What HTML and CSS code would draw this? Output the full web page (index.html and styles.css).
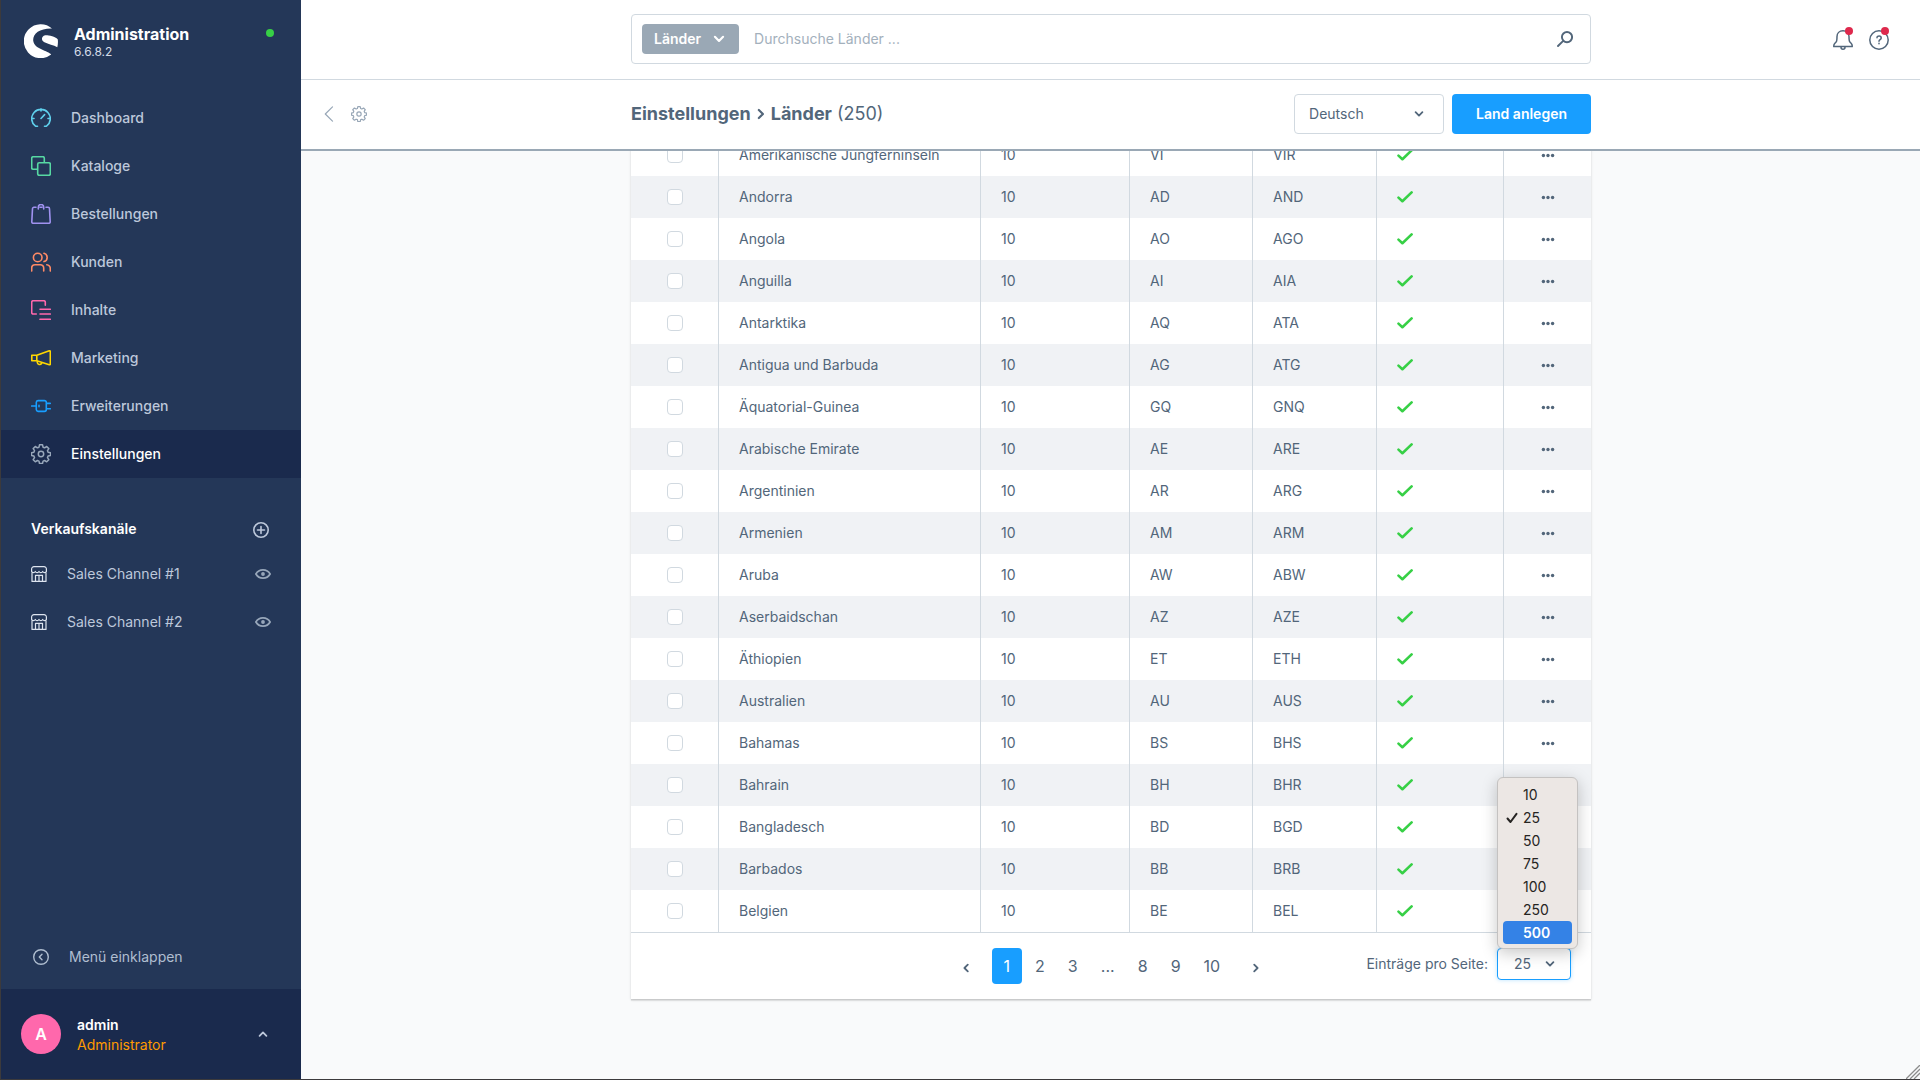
FILE: index.html
```html
<!DOCTYPE html>
<html lang="de">
<head>
<meta charset="utf-8">
<title>Länder</title>
<link rel="stylesheet" href="styles.css">
</head>
<body>
<svg class="sprite" aria-hidden="true">
  <symbol id="check" viewBox="0 0 16 16"><path d="M1.5 8.6 5.4 12.2 14.6 3.4" fill="none" stroke="#37d046" stroke-width="2.6" stroke-linecap="round" stroke-linejoin="round"/></symbol>
  <symbol id="dots" viewBox="0 0 16 16"><g fill="#52667a"><circle cx="3.4" cy="8.500" r="1.700"/><circle cx="8" cy="8.500" r="1.700"/><circle cx="12.6" cy="8.500" r="1.700"/></g></symbol>
  <symbol id="chevron" viewBox="0 0 10 10"><path d="M1.6 3.2 5 6.6 8.4 3.2" fill="none" stroke="currentColor" stroke-width="1.8" stroke-linecap="round" stroke-linejoin="round"/></symbol>
  <symbol id="gear" viewBox="0 0 20 20"><g fill="none" stroke="currentColor" stroke-width="1.5" stroke-linejoin="round"><circle cx="10" cy="10" r="2.7"/><path d="M8.5.8h3l.6 2.4 1.5.6 2.1-1.3 2.1 2.1-1.3 2.1.6 1.6 2.4.5v2.6l-2.4.6-.6 1.6 1.3 2.1-2.1 2.1-2.1-1.3-1.5.6-.6 2.4h-3l-.5-2.4-1.6-.6-2.1 1.3-2.1-2.1 1.3-2.1-.6-1.6-2.4-.6V8.8l2.4-.5.6-1.6-1.3-2.1 2.1-2.1 2.1 1.3 1.6-.6z"/></g></symbol>
  <symbol id="shop" viewBox="0 0 16 16"><g fill="none" stroke="currentColor" stroke-width="1.2" stroke-linejoin="round"><path d="M3 .6h10a2.4 2.4 0 0 1 2.4 2.4v2.5c-.8 1.5-2.8 1.5-3.7 0-.9 1.5-2.8 1.5-3.7 0-.9 1.5-2.8 1.5-3.7 0-.9 1.5-2.9 1.5-3.7 0V3A2.4 2.4 0 0 1 3 .6zM1 6.5v8.9h14V6.5M4.5 15.400V9.300h7v6.100M8 9.300v6.100"/></g></symbol>
  <symbol id="eye" viewBox="0 0 16 16"><path d="M.9 8C4 2.500 12 2.500 15.100 8 12 13.500 4 13.500.9 8z" fill="none" stroke="currentColor" stroke-width="1.700"/><circle cx="8" cy="8" r="1.900" fill="currentColor"/></symbol>
</svg>
<div class="app">
  <aside class="sidebar">
    <header class="brand">
      <svg class="logo" viewBox="0 0 34 34"><path d="M28 4.400A17 17 0 1 0 27.200 30.600C24.500 26.500 10 25.400 9.200 16.500 8.800 9.600 15.500 4.100 28 4.400zM33.300 23.200C33.900 20.700 34.200 17.600 33.700 15.300 31 12.200 25 11.100 21.200 11.200 17 12.300 17 16.400 20.400 18.200 24.300 20.300 29.700 20.800 33.300 23.200z" fill="#fff"/></svg>
      <div class="brand-text"><strong>Administration</strong><span>6.6.8.2</span></div>
      <i class="status"></i>
    </header>
    <nav class="nav">
      <a href="#"><svg viewBox="0 0 20 20" class="cyan"><path d="M6.500 18.200H4.500A9.300 9.300 0 1 1 15.500 18.200H13.500M10 .8V3M.8 10.500H3M17 10.500h2.200M10 10.500l3.600-3.900"/></svg>Dashboard</a>
      <a href="#"><svg viewBox="0 0 20 20" class="green"><path d="M6 13.300H2.200A1.500 1.500 0 0 1 .7 11.800V2.200A1.500 1.500 0 0 1 2.200.7h9.600A1.500 1.500 0 0 1 13.300 2.200V6"/><rect x="6.700" y="6.700" width="12.600" height="12.600" rx="1.500"/></svg>Kataloge</a>
      <a href="#"><svg viewBox="0 0 20 20" class="purple"><path d="M5 3.300H2.900A1.400 1.400 0 0 0 1.500 4.700L.8 17.800A1.400 1.400 0 0 0 2.200 19.300H17.800A1.400 1.400 0 0 0 19.200 17.800L18.500 4.700A1.400 1.400 0 0 0 17.100 3.300H15M9 3.300H11M7.300 5V3.200A2.700 2.700 0 0 1 12.700 3.200V5"/></svg>Bestellungen</a>
      <a href="#"><svg viewBox="0 0 20 20" class="orange"><circle cx="6.700" cy="5.500" r="4.300"/><path d="M.7 19V16A3.300 3.300 0 0 1 4 12.700H9.400A3.300 3.300 0 0 1 12.700 16V19M13 1.300A4.300 4.300 0 0 1 13 9.600M15.800 12.700A4 4 0 0 1 19.300 16.500V19"/></svg>Kunden</a>
      <a href="#"><svg viewBox="0 0 20 20" class="pink"><path d="M5.300 14H2.200A1.500 1.500 0 0 1 .7 12.500V2.200A1.500 1.500 0 0 1 2.200.7h10.600A1.500 1.500 0 0 1 14.300 2.200V5.300M9 9.300H19.300M9 14H19.300M9 19.300H19.300"/></svg>Inhalte</a>
      <a href="#"><svg viewBox="0 0 20 20" class="yellow"><path d="M5.800 7.200 18.300 2.800Q19.300 2.600 19.300 3.700V16Q19.300 17 18.300 16.700L5.800 12.700zM.8 7.200H5.800V12.700H.8zM6.300 13V14.500A2.300 2.300 0 0 0 10.500 15.500L11 14.500"/></svg>Marketing</a>
      <a href="#"><svg viewBox="0 0 20 20" class="blue"><path d="M.6 10H5.300M7 4.600H13.500A1.800 1.800 0 0 1 15.300 6.400V13.600A1.800 1.800 0 0 1 13.500 15.400H7A1.800 1.800 0 0 1 5.300 13.600V6.400A1.800 1.800 0 0 1 7 4.600zM15.300 7.400H19.300M15.300 12.700H19.300M8 9.200V10.800"/></svg>Erweiterungen</a>
      <a href="#" class="active"><svg viewBox="0 0 20 20" class="grey"><use href="#gear"/></svg>Einstellungen</a>
    </nav>
    <section class="channels">
      <div class="channels-head"><h2>Verkaufskanäle</h2><button type="button" aria-label="Hinzufügen"><svg class="i16" viewBox="0 0 16 16"><path d="M8 4.500V11.500M4.500 8H11.500M8 .8a7.200 7.200 0 1 1 0 14.400A7.200 7.200 0 0 1 8 .8z" fill="none" stroke="currentColor" stroke-width="1.600" stroke-linecap="round"/></svg></button></div>
      <a href="#"><svg class="i16 shop"><use href="#shop"/></svg><span>Sales Channel #1</span><svg class="i16 eye"><use href="#eye"/></svg></a>
      <a href="#"><svg class="i16 shop"><use href="#shop"/></svg><span>Sales Channel #2</span><svg class="i16 eye"><use href="#eye"/></svg></a>
    </section>
    <button type="button" class="collapse"><svg class="i16" viewBox="0 0 16 16"><path d="M9 5.200 6.300 8 9 10.800M8 .7a7.300 7.300 0 1 1 0 14.600A7.300 7.300 0 0 1 8 .7z" fill="none" stroke="currentColor" stroke-width="1.400" stroke-linecap="round" stroke-linejoin="round"/></svg>Menü einklappen</button>
    <button type="button" class="user">
      <span class="avatar">A</span>
      <span class="user-text"><strong>admin</strong><span>Administrator</span></span>
      <svg class="i10 up"><use href="#chevron"/></svg>
    </button>
  </aside>
  <main class="main">
    <header class="topbar">
      <div></div>
      <form class="search">
        <button type="button" class="tag">Länder<svg class="i12"><use href="#chevron"/></svg></button>
        <input type="text" placeholder="Durchsuche Länder ..." aria-label="Suche">
        <button type="button" class="plain" aria-label="Suchen"><svg class="i16" viewBox="0 0 16 16"><path d="M6.200 9.800 1 15M10 1a5.100 5.100 0 1 1 0 10.200A5.100 5.100 0 0 1 10 1z" fill="none" stroke="currentColor" stroke-width="1.900" stroke-linecap="round"/></svg></button>
      </form>
      <div class="tools">
        <button type="button" class="plain tool" aria-label="Benachrichtigungen"><svg class="i20" viewBox="0 0 20 20"><path d="M10 .8C6.300.8 4 3.300 4 6.500 4 11 3.700 11.500 1.900 13.200 1 14.200.6 15 .8 16.600H19.200C19.400 15 19 14.200 18.100 13.200 16.300 11.500 16 11 16 6.500 16 3.300 13.700.8 10 .8zM8 17.200A2 2 0 0 0 12 17.200" fill="none" stroke="currentColor" stroke-width="1.500" stroke-linejoin="round"/></svg><i class="badge"></i></button>
        <button type="button" class="plain tool" aria-label="Hilfe"><svg class="i20" viewBox="0 0 20 20"><path d="M10 .8a9.200 9.200 0 1 1 0 18.400A9.200 9.200 0 0 1 10 .8z" fill="none" stroke="currentColor" stroke-width="1.500"/><path d="M8 7.700C8 5.500 12.200 5.400 12.200 7.900 12.200 9.700 10 9.500 10 11.300M10 13.200V13.700" fill="none" stroke="currentColor" stroke-width="1.500" stroke-linecap="round"/></svg><i class="badge"></i></button>
      </div>
    </header>
    <div class="smartbar">
      <div class="smart-left">
        <a href="#" aria-label="Zurück"><svg class="i16" viewBox="0 0 16 16"><path d="M11.500.8 4.300 8 11.500 15.200" fill="none" stroke="currentColor" stroke-width="1.200" stroke-linecap="round" stroke-linejoin="round"/></svg></a>
        <a href="#" aria-label="Optionen"><svg class="i16"><use href="#gear"/></svg></a>
      </div>
      <div class="smart-center">
        <h1>Einstellungen<svg class="i12 right"><use href="#chevron"/></svg>Länder <span>(250)</span></h1>
        <div class="pick lang"><select aria-label="Sprache"><option>Deutsch</option></select><svg class="i10"><use href="#chevron"/></svg></div>
        <button type="button" class="primary">Land anlegen</button>
      </div>
      <div></div>
    </div>
    <div class="content">
      <section class="card">
        <table>
          <colgroup><col class="c1"><col class="c2"><col class="c3"><col class="c4"><col class="c5"><col class="c6"><col class="c7"></colgroup>
          <tbody>
          <tr><td><input type="checkbox" aria-label="Amerikanische Jungferninseln"></td><td>Amerikanische Jungferninseln</td><td>10</td><td>VI</td><td>VIR</td><td><svg class="i16"><use href="#check"/></svg></td><td><button type="button" class="plain" aria-label="Menü"><svg class="i16"><use href="#dots"/></svg></button></td></tr>
          <tr><td><input type="checkbox" aria-label="Andorra"></td><td>Andorra</td><td>10</td><td>AD</td><td>AND</td><td><svg class="i16"><use href="#check"/></svg></td><td><button type="button" class="plain" aria-label="Menü"><svg class="i16"><use href="#dots"/></svg></button></td></tr>
          <tr><td><input type="checkbox" aria-label="Angola"></td><td>Angola</td><td>10</td><td>AO</td><td>AGO</td><td><svg class="i16"><use href="#check"/></svg></td><td><button type="button" class="plain" aria-label="Menü"><svg class="i16"><use href="#dots"/></svg></button></td></tr>
          <tr><td><input type="checkbox" aria-label="Anguilla"></td><td>Anguilla</td><td>10</td><td>AI</td><td>AIA</td><td><svg class="i16"><use href="#check"/></svg></td><td><button type="button" class="plain" aria-label="Menü"><svg class="i16"><use href="#dots"/></svg></button></td></tr>
          <tr><td><input type="checkbox" aria-label="Antarktika"></td><td>Antarktika</td><td>10</td><td>AQ</td><td>ATA</td><td><svg class="i16"><use href="#check"/></svg></td><td><button type="button" class="plain" aria-label="Menü"><svg class="i16"><use href="#dots"/></svg></button></td></tr>
          <tr><td><input type="checkbox" aria-label="Antigua und Barbuda"></td><td>Antigua und Barbuda</td><td>10</td><td>AG</td><td>ATG</td><td><svg class="i16"><use href="#check"/></svg></td><td><button type="button" class="plain" aria-label="Menü"><svg class="i16"><use href="#dots"/></svg></button></td></tr>
          <tr><td><input type="checkbox" aria-label="Äquatorial-Guinea"></td><td>Äquatorial-Guinea</td><td>10</td><td>GQ</td><td>GNQ</td><td><svg class="i16"><use href="#check"/></svg></td><td><button type="button" class="plain" aria-label="Menü"><svg class="i16"><use href="#dots"/></svg></button></td></tr>
          <tr><td><input type="checkbox" aria-label="Arabische Emirate"></td><td>Arabische Emirate</td><td>10</td><td>AE</td><td>ARE</td><td><svg class="i16"><use href="#check"/></svg></td><td><button type="button" class="plain" aria-label="Menü"><svg class="i16"><use href="#dots"/></svg></button></td></tr>
          <tr><td><input type="checkbox" aria-label="Argentinien"></td><td>Argentinien</td><td>10</td><td>AR</td><td>ARG</td><td><svg class="i16"><use href="#check"/></svg></td><td><button type="button" class="plain" aria-label="Menü"><svg class="i16"><use href="#dots"/></svg></button></td></tr>
          <tr><td><input type="checkbox" aria-label="Armenien"></td><td>Armenien</td><td>10</td><td>AM</td><td>ARM</td><td><svg class="i16"><use href="#check"/></svg></td><td><button type="button" class="plain" aria-label="Menü"><svg class="i16"><use href="#dots"/></svg></button></td></tr>
          <tr><td><input type="checkbox" aria-label="Aruba"></td><td>Aruba</td><td>10</td><td>AW</td><td>ABW</td><td><svg class="i16"><use href="#check"/></svg></td><td><button type="button" class="plain" aria-label="Menü"><svg class="i16"><use href="#dots"/></svg></button></td></tr>
          <tr><td><input type="checkbox" aria-label="Aserbaidschan"></td><td>Aserbaidschan</td><td>10</td><td>AZ</td><td>AZE</td><td><svg class="i16"><use href="#check"/></svg></td><td><button type="button" class="plain" aria-label="Menü"><svg class="i16"><use href="#dots"/></svg></button></td></tr>
          <tr><td><input type="checkbox" aria-label="Äthiopien"></td><td>Äthiopien</td><td>10</td><td>ET</td><td>ETH</td><td><svg class="i16"><use href="#check"/></svg></td><td><button type="button" class="plain" aria-label="Menü"><svg class="i16"><use href="#dots"/></svg></button></td></tr>
          <tr><td><input type="checkbox" aria-label="Australien"></td><td>Australien</td><td>10</td><td>AU</td><td>AUS</td><td><svg class="i16"><use href="#check"/></svg></td><td><button type="button" class="plain" aria-label="Menü"><svg class="i16"><use href="#dots"/></svg></button></td></tr>
          <tr><td><input type="checkbox" aria-label="Bahamas"></td><td>Bahamas</td><td>10</td><td>BS</td><td>BHS</td><td><svg class="i16"><use href="#check"/></svg></td><td><button type="button" class="plain" aria-label="Menü"><svg class="i16"><use href="#dots"/></svg></button></td></tr>
          <tr><td><input type="checkbox" aria-label="Bahrain"></td><td>Bahrain</td><td>10</td><td>BH</td><td>BHR</td><td><svg class="i16"><use href="#check"/></svg></td><td><button type="button" class="plain" aria-label="Menü"><svg class="i16"><use href="#dots"/></svg></button></td></tr>
          <tr><td><input type="checkbox" aria-label="Bangladesch"></td><td>Bangladesch</td><td>10</td><td>BD</td><td>BGD</td><td><svg class="i16"><use href="#check"/></svg></td><td><button type="button" class="plain" aria-label="Menü"><svg class="i16"><use href="#dots"/></svg></button></td></tr>
          <tr><td><input type="checkbox" aria-label="Barbados"></td><td>Barbados</td><td>10</td><td>BB</td><td>BRB</td><td><svg class="i16"><use href="#check"/></svg></td><td><button type="button" class="plain" aria-label="Menü"><svg class="i16"><use href="#dots"/></svg></button></td></tr>
          <tr><td><input type="checkbox" aria-label="Belgien"></td><td>Belgien</td><td>10</td><td>BE</td><td>BEL</td><td><svg class="i16"><use href="#check"/></svg></td><td><button type="button" class="plain" aria-label="Menü"><svg class="i16"><use href="#dots"/></svg></button></td></tr>
          </tbody>
        </table>
        <footer class="pagination">
          <div></div>
          <nav class="pages">
            <button type="button" class="arrow" aria-label="Zurück"><svg class="i10 left"><use href="#chevron"/></svg></button>
            <button type="button" class="current">1</button>
            <button type="button">2</button>
            <button type="button">3</button>
            <span>...</span>
            <button type="button">8</button>
            <button type="button">9</button>
            <button type="button">10</button>
            <button type="button" class="arrow" aria-label="Weiter"><svg class="i10 right"><use href="#chevron"/></svg></button>
          </nav>
          <div class="per-page">
            <label for="limit">Einträge pro Seite:</label>
            <div class="pick limit">
              <select id="limit"><option>25</option></select><svg class="i10"><use href="#chevron"/></svg>
              <ul class="menu" role="listbox">
                <li role="option">10</li>
                <li role="option" aria-selected="true"><svg class="tick" viewBox="0 0 12 12"><path d="M1.500 6.500 4.500 10 10.500 1.800" fill="none" stroke="#262422" stroke-width="2" stroke-linecap="round" stroke-linejoin="round"/></svg>25</li>
                <li role="option">50</li>
                <li role="option">75</li>
                <li role="option">100</li>
                <li role="option">250</li>
                <li role="option" class="hover">500</li>
              </ul>
            </div>
          </div>
        </footer>
      </section>
    </div>
  </main>
  <svg class="grip" viewBox="0 0 14 14"><path d="M0 14 14 0M4 14 14 4M8 14 14 8" stroke="#8c8c8c" stroke-width="1.300"/></svg>
</div>
</body>
</html>
```

FILE: styles.css
```css
* { box-sizing: border-box; }
body { margin: 0; font: 14px/20px Inter, "Liberation Sans", sans-serif; color: #52667a; }
button, input, select { font: inherit; color: inherit; margin: 0; }
button { border: 0; background: none; padding: 0; cursor: pointer; text-align: left; }
a { color: inherit; text-decoration: none; }
svg { display: block; flex: none; }
h1, h2, ul { margin: 0; padding: 0; }
.sprite { position: absolute; width: 0; height: 0; }
.i10 { width: 10px; height: 10px; }
.i12 { width: 12px; height: 12px; }
.i16 { width: 16px; height: 16px; }
.i20 { width: 20px; height: 20px; }
.up { transform: rotate(180deg); }
.left { transform: rotate(90deg); }
.right { transform: rotate(-90deg); }

.app { position: relative; display: flex; height: 100vh; border: solid #3c3a3c; border-width: 0 0 1px 1px; }

/* Sidebar */
.sidebar { width: 300px; flex: none; display: flex; flex-direction: column; background: #243758; color: #bdc8db; }
.brand { display: flex; align-items: flex-start; height: 94px; padding: 24px 27px 0 23px; color: #fff; }
.logo { width: 34px; height: 34px; margin-right: 16px; }
.brand-text { flex: 1; display: flex; flex-direction: column; }
.brand-text strong { font-size: 16px; font-weight: 700; line-height: 20px; }
.brand-text span { font-size: 12px; line-height: 16px; color: #d5dce8; }
.status { width: 8px; height: 8px; margin-top: 5px; border-radius: 50%; background: #37d046; }
.nav a { display: flex; align-items: center; gap: 20px; height: 48px; padding: 0 30px; font-weight: 500; }
.nav svg { width: 20px; height: 20px; fill: none; stroke: currentColor; stroke-width: 1.6; stroke-linecap: round; stroke-linejoin: round; }
.nav .active { background: #1a2a4d; color: #fff; }
.cyan { color: #5fd0ec; }
.green { color: #57d9a3; }
.purple { color: #a092f0; }
.orange { color: #ff8a65; }
.pink { color: #ff68ac; }
.yellow { color: #ffd700; }
.blue { color: #189eff; }
.nav .grey { color: #98a7ba; }
.channels { flex: 1; padding-top: 32px; }
.channels-head { display: flex; justify-content: space-between; align-items: center; height: 40px; padding: 0 32px 0 30px; }
.channels h2 { font-size: 14px; line-height: 20px; padding-bottom: 2px; font-weight: 600; color: #fff; }
.channels a { display: flex; align-items: center; gap: 20px; height: 48px; padding: 0 30px; }
.channels span { flex: 1; }
.shop { color: #dde4ef; }
.eye { color: #98a7ba; }
.collapse { display: flex; align-items: center; gap: 20px; height: 64px; padding: 0 32px; color: #b0bed0; }
.user { display: flex; align-items: center; height: 90px; padding: 0 33px 0 20px; background: #1a2a4d; }
.avatar { display: flex; align-items: center; justify-content: center; width: 40px; height: 40px; margin-right: 16px; border-radius: 50%; background: #ff68ac; color: #fff; font-size: 16px; font-weight: 600; }
.user-text { flex: 1; display: flex; flex-direction: column; padding-top: 2px; color: #ff9a00; }
.user-text strong { font-weight: 600; color: #fff; }

/* Header bars */
.main { flex: 1; min-width: 0; display: flex; flex-direction: column; background: #f9fafb; }
.topbar, .smartbar { display: grid; grid-template-columns: 1fr minmax(0, 960px) 1fr; align-items: center; flex: none; padding: 0 0 1px 1px; background: #fff; }
.topbar { height: 80px; border-bottom: 1px solid #d1d9e0; }
.search { display: flex; align-items: center; height: 50px; padding: 0 17px 0 10px; border: 1px solid #d1d9e0; border-radius: 4px; }
.search input { flex: 1; min-width: 0; border: 0; padding: 0 15px; outline: 0; background: none; }
.search input::placeholder { color: #a3b0bc; opacity: 1; }
.tag { display: flex; align-items: center; gap: 12px; height: 30px; padding: 0 14px 0 12px; border-radius: 4px; background: #9aa8b5; color: #fff; font-weight: 600; }
.tools { display: flex; justify-content: flex-end; gap: 16px; padding: 2px 31px 0 0; }
.tool { position: relative; }
.badge { position: absolute; top: -3px; right: 0; width: 8px; height: 8px; border-radius: 50%; background: #de294c; }
.smartbar { height: 71px; border-bottom: 2px solid #9aa8b5; }
.smart-left { display: flex; gap: 14px; padding-left: 19px; color: #98a7b7; }
.smart-center { display: flex; align-items: center; gap: 8px; }
h1 { flex: 1; display: flex; align-items: center; font-size: 18px; line-height: 24px; font-weight: 700; }
h1 .i12 { margin: 0 4px; }
h1 span { font-weight: 400; margin-left: 5px; }
.pick { position: relative; }
.pick select { display: block; width: 100%; height: 100%; appearance: none; outline: 0; background: #fff; border: 1px solid #d1d9e0; border-radius: 4px; }
.pick > svg { position: absolute; top: 50%; margin-top: -5px; pointer-events: none; }
.lang { width: 150px; height: 40px; }
.lang select { padding: 0 14px; }
.lang > svg { right: 20px; }
.primary { height: 40px; padding: 0 24px; border-radius: 4px; background: #189eff; color: #fff; font-weight: 600; }

/* Listing, kept at its end */
.content { flex: 1; min-height: 0; overflow: hidden; display: flex; flex-direction: column; justify-content: flex-end; align-items: center; padding: 0 0 80px 1px; }
.card { width: 100%; max-width: 960px; flex: none; background: #fff; box-shadow: 0 1px 1px rgba(0, 0, 0, .08), 0 2px 1px rgba(0, 0, 0, .06), 0 1px 3px rgba(0, 0, 0, .1); }
table { width: 100%; table-layout: fixed; border-spacing: 0; }
.c1 { width: 88px; }
.c3 { width: 149px; }
.c4 { width: 123px; }
.c5 { width: 124px; }
.c6 { width: 127px; }
.c7 { width: 87px; }
td { height: 42px; padding: 0 20px; border-right: 1px solid #d1d9e0; }
td:last-child { border-right: 0; }
td:first-child input, td:last-child button { display: block; margin: 0 auto; }
tr:nth-child(even) { background: #f0f2f5; }
input[type=checkbox] { appearance: none; width: 16px; height: 16px; border: 1px solid #d1d9e0; border-radius: 4px; background: #fff; }
.pagination { display: grid; grid-template-columns: 1fr auto 1fr; align-items: start; padding: 15px 20px; border-top: 1px solid #d1d9e0; }
.pages { display: flex; gap: 3px; font-size: 16px; }
.pages > * { min-width: 30px; height: 36px; line-height: 36px; padding: 0 10px; text-align: center; border-radius: 4px; }
.pages .arrow { margin: 0 8px; padding-top: 4px; }
.pages .current { background: #189eff; color: #fff; }
.per-page { display: flex; justify-content: flex-end; align-items: center; gap: 9px; }
.limit { width: 74px; height: 32px; }
.limit select { padding: 0 16px; font-size: 14px; border-color: #189eff; box-shadow: 0 0 4px rgba(24, 158, 255, .3); }
.limit > svg { right: 16px; }
.menu { position: absolute; left: 0; bottom: calc(100% - 1px); width: 81px; padding: 5px 5px 4px; list-style: none; background: #ece7e4; border: 1px solid #c4c2c1; border-radius: 6px; box-shadow: 0 4px 16px rgba(0, 0, 0, .22); color: #262422; }
.menu li { position: relative; height: 23px; line-height: 23px; padding-left: 20px; border-radius: 4px; }
.menu .hover { background: #3482e6; color: #fff; font-weight: 600; }
.tick { position: absolute; left: 3px; top: 6px; width: 12px; height: 12px; }
.grip { position: absolute; right: 0; bottom: 0; width: 14px; height: 14px; }
```
